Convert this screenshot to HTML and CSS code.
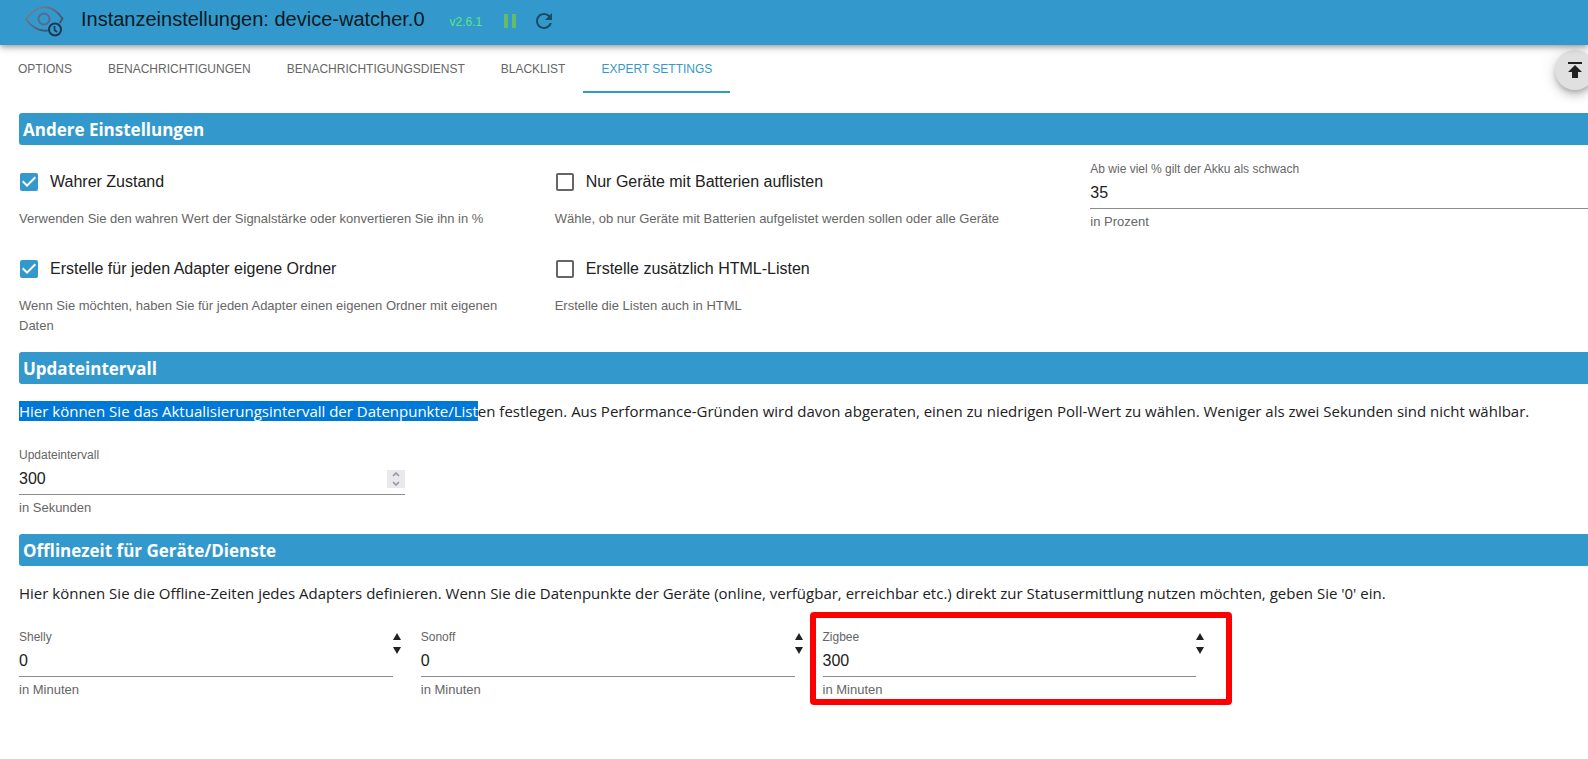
FILE: index.html
```html
<!DOCTYPE html>
<html lang="de">
<head>
<meta charset="utf-8">
<meta name="viewport" content="width=device-width, initial-scale=1">
<title>Instanzeinstellungen: device-watcher.0</title>
<link rel="stylesheet" href="styles.css">
</head>
<body>
<header class="appbar">
  <svg class="logo" viewBox="0 0 40 32" fill="none" stroke-width="2" aria-hidden="true">
    <defs>
      <linearGradient id="lid" x1="0" y1="0" x2="1" y2="1">
        <stop offset="0" stop-color="#7d88a0"/>
        <stop offset="1" stop-color="#2f4763"/>
      </linearGradient>
    </defs>
    <path stroke="url(#lid)" stroke-linecap="round" d="M23 25.500C15 26.500 8 22 2 14.500C8 6 14 2 20.500 2S33 6 38.500 13.500L36 17.500"/>
    <circle stroke="#5a6b86" cx="20" cy="14" r="5.500"/>
    <circle stroke="#1d3850" cx="31" cy="24.500" r="6"/>
    <path stroke="#1d3850" stroke-width="1.700" d="M30.500 21v4l2.500 2"/>
  </svg>
  <h1 class="appbar-title">Instanzeinstellungen: device-watcher.0</h1>
  <span class="version">v2.6.1</span>
  <button class="icon-button pause" type="button" aria-label="Pause">
    <svg viewBox="0 0 24 24"><path fill="currentColor" d="M6 19h4V5H6v14zm8-14v14h4V5h-4z"/></svg>
  </button>
  <button class="icon-button reload" type="button" aria-label="Neu starten">
    <svg viewBox="0 0 24 24"><path fill="currentColor" d="M17.650 6.350C16.200 4.900 14.210 4 12 4c-4.420 0-7.990 3.580-7.990 8s3.570 8 7.990 8c3.730 0 6.840-2.550 7.730-6h-2.080c-.82 2.330-3.040 4-5.650 4-3.310 0-6-2.690-6-6s2.690-6 6-6c1.660 0 3.140.69 4.220 1.780L13 11h7V4l-2.350 2.350z"/></svg>
  </button>
</header>

<nav class="tabs">
  <a class="tab" href="#options">OPTIONS</a>
  <a class="tab" href="#benachrichtigungen">BENACHRICHTIGUNGEN</a>
  <a class="tab" href="#dienst">BENACHRICHTIGUNGSDIENST</a>
  <a class="tab" href="#blacklist">BLACKLIST</a>
  <a class="tab tab-active" href="#expert" aria-current="page">EXPERT SETTINGS</a>
  <button class="fab" type="button" aria-label="Nach oben">
    <svg viewBox="0 0 24 24"><path fill="currentColor" d="M5 4v2h14V4H5zm0 10h4v6h6v-6h4l-7-7-7 7z"/></svg>
  </button>
</nav>

<main class="content">
  <section class="section">
    <h2 class="section-title">Andere Einstellungen</h2>
    <div class="grid grid-3">
      <div class="option">
        <label class="option-label">
          <span class="check"><input type="checkbox" checked><svg viewBox="0 0 18 18"><path fill="currentColor" d="M7 14L2 9l1.400-1.400L7 11.200l7.600-7.600L16 5z"/></svg></span>
          Wahrer Zustand
        </label>
        <p class="hint">Verwenden Sie den wahren Wert der Signalstärke oder konvertieren Sie ihn in %</p>
      </div>
      <div class="option">
        <label class="option-label">
          <span class="check"><input type="checkbox"></span>
          Nur Geräte mit Batterien auflisten
        </label>
        <p class="hint">Wähle, ob nur Geräte mit Batterien aufgelistet werden sollen oder alle Geräte</p>
      </div>
      <div class="field">
        <label class="field-label" for="akku">Ab wie viel % gilt der Akku als schwach</label>
        <div class="field-line"><input class="field-input" id="akku" type="number" value="35"></div>
        <p class="hint">in Prozent</p>
      </div>
      <div class="option">
        <label class="option-label">
          <span class="check"><input type="checkbox" checked><svg viewBox="0 0 18 18"><path fill="currentColor" d="M7 14L2 9l1.400-1.400L7 11.200l7.600-7.600L16 5z"/></svg></span>
          Erstelle für jeden Adapter eigene Ordner
        </label>
        <p class="hint">Wenn Sie möchten, haben Sie für jeden Adapter einen eigenen Ordner mit eigenen Daten</p>
      </div>
      <div class="option">
        <label class="option-label">
          <span class="check"><input type="checkbox"></span>
          Erstelle zusätzlich HTML-Listen
        </label>
        <p class="hint">Erstelle die Listen auch in HTML</p>
      </div>
    </div>
  </section>

  <section class="section">
    <h2 class="section-title">Updateintervall</h2>
    <p class="description"><mark class="selection">Hier können Sie das Aktualisierungsintervall der Datenpunkte/List</mark>en festlegen. Aus Performance-Gründen wird davon abgeraten, einen zu niedrigen Poll-Wert zu wählen. Weniger als zwei Sekunden sind nicht wählbar.</p>
    <div class="grid grid-4">
      <div class="field">
        <label class="field-label" for="intervall">Updateintervall</label>
        <div class="field-line">
          <input class="field-input" id="intervall" type="number" value="300">
          <span class="spinner">
            <button type="button" aria-label="Erhöhen"><svg viewBox="0 0 18 9"><path d="M6 6l3-3 3 3"/></svg></button>
            <button type="button" aria-label="Verringern"><svg viewBox="0 0 18 9"><path d="M6 3l3 3 3-3"/></svg></button>
          </span>
        </div>
        <p class="hint">in Sekunden</p>
      </div>
    </div>
  </section>

  <section class="section">
    <h2 class="section-title">Offlinezeit für Geräte/Dienste</h2>
    <p class="description">Hier können Sie die Offline-Zeiten jedes Adapters definieren. Wenn Sie die Datenpunkte der Geräte (online, verfügbar, erreichbar etc.) direkt zur Statusermittlung nutzen möchten, geben Sie '0' ein.</p>
    <div class="grid grid-4">
      <div class="stepper">
        <div class="field">
          <label class="field-label" for="shelly">Shelly</label>
          <div class="field-line"><input class="field-input" id="shelly" type="number" value="0"></div>
          <p class="hint">in Minuten</p>
        </div>
        <div class="steps">
          <button type="button" aria-label="Shelly erhöhen"><svg viewBox="0 0 8 7"><path fill="currentColor" d="M0 7l4-7 4 7z"/></svg></button>
          <button type="button" aria-label="Shelly verringern"><svg viewBox="0 0 8 7"><path fill="currentColor" d="M0 0h8L4 7z"/></svg></button>
        </div>
      </div>
      <div class="stepper">
        <div class="field">
          <label class="field-label" for="sonoff">Sonoff</label>
          <div class="field-line"><input class="field-input" id="sonoff" type="number" value="0"></div>
          <p class="hint">in Minuten</p>
        </div>
        <div class="steps">
          <button type="button" aria-label="Sonoff erhöhen"><svg viewBox="0 0 8 7"><path fill="currentColor" d="M0 7l4-7 4 7z"/></svg></button>
          <button type="button" aria-label="Sonoff verringern"><svg viewBox="0 0 8 7"><path fill="currentColor" d="M0 0h8L4 7z"/></svg></button>
        </div>
      </div>
      <div class="stepper stepper-marked">
        <div class="field">
          <label class="field-label" for="zigbee">Zigbee</label>
          <div class="field-line"><input class="field-input" id="zigbee" type="number" value="300"></div>
          <p class="hint">in Minuten</p>
        </div>
        <div class="steps">
          <button type="button" aria-label="Zigbee erhöhen"><svg viewBox="0 0 8 7"><path fill="currentColor" d="M0 7l4-7 4 7z"/></svg></button>
          <button type="button" aria-label="Zigbee verringern"><svg viewBox="0 0 8 7"><path fill="currentColor" d="M0 0h8L4 7z"/></svg></button>
        </div>
      </div>
    </div>
  </section>
</main>
</body>
</html>
```

FILE: styles.css
```css
* {
  box-sizing: border-box;
}

body {
  min-height: 100vh;
  margin: 0;
  overflow-x: hidden;
  background: #fff;
  color: #212121;
  font-family: "Liberation Sans", Arial, sans-serif;
  font-size: 16px;
}

h1, h2, p {
  margin: 0;
}

button {
  display: flex;
  align-items: center;
  justify-content: center;
  padding: 0;
  border: 0;
  background: none;
  color: inherit;
}

/* Header */
.appbar {
  position: relative;
  display: flex;
  align-items: center;
  height: 45px;
  padding: 0 24px 4px;
  background: #3399cc;
  box-shadow: 0 2px 4px -1px rgba(0, 0, 0, .2), 0 4px 5px rgba(0, 0, 0, .14), 0 1px 10px rgba(0, 0, 0, .12);
}

.logo {
  width: 40px;
  height: 32px;
}

.appbar-title {
  margin: 0 0 4px 17px;
  color: #0a1a22;
  font-size: 20px;
  font-weight: 400;
  line-height: 32px;
}

.version {
  margin: 2px 16px 0 25px;
  color: #5be584;
  font-size: 12px;
}

.icon-button {
  margin-right: 10px;
}

.icon-button svg {
  width: 24px;
  height: 24px;
}

.pause {
  color: #66bb6a;
}

.reload {
  color: #1b4b64;
}

/* Tabs */
.tabs {
  display: flex;
  align-items: center;
  height: 48px;
  margin-right: -7px;
}

.tab {
  display: flex;
  align-items: center;
  justify-content: center;
  height: 48px;
  padding: 2px 18px 0;
  border-bottom: 2px solid transparent;
  color: #666;
  font-size: 12px;
  text-decoration: none;
  white-space: nowrap;
}

.tab-active {
  border-color: #3399cc;
  color: #3399cc;
}

.fab {
  width: 40px;
  height: 40px;
  margin: 2px 0 0 auto;
  border-radius: 50%;
  background: #e0e0e0;
  box-shadow: 0 3px 5px -1px rgba(0, 0, 0, .2), 0 6px 10px rgba(0, 0, 0, .14), 0 1px 18px rgba(0, 0, 0, .12);
}

.fab svg {
  width: 24px;
  height: 24px;
}

/* Sections */
.content {
  display: flex;
  flex-direction: column;
  gap: 16px;
  margin: 20px -22px 0 19px;
  padding-bottom: 32px;
}

.section-title {
  height: 32px;
  margin-bottom: 16px;
  padding-left: 4px;
  border-radius: 3px;
  background: #3399cc;
  color: #fff;
  font-family: "Open Sans", "Noto Sans", sans-serif;
  font-size: 17px;
  font-weight: 700;
  line-height: 34px;
}

.description {
  margin-bottom: 25px;
  font-family: "Open Sans", "Noto Sans", sans-serif;
  font-size: 15px;
  line-height: 22px;
}

.selection {
  background: #0078d7;
  color: #fff;
}

.grid {
  display: grid;
  gap: 16px;
}

.grid-3 {
  grid-template-columns: repeat(3, 1fr);
}

.grid-4 {
  grid-template-columns: repeat(4, 1fr);
}

.hint {
  padding-right: 16px;
  color: #666;
  font-size: 13px;
  line-height: 20px;
}

/* Checkboxes */
.option-label {
  display: flex;
  align-items: center;
  gap: 12px;
  height: 42px;
  margin-bottom: 6px;
  padding-left: 1px;
}

.check {
  position: relative;
  width: 18px;
  height: 18px;
}

.check input {
  display: block;
  width: 18px;
  height: 18px;
  margin: 0;
  appearance: none;
  border: 2px solid #666;
  border-radius: 2px;
}

.check input:checked {
  border-color: #3399cc;
  background: #3399cc;
}

.check svg {
  position: absolute;
  inset: 0;
  color: #fff;
  pointer-events: none;
}

/* Number fields */
.field {
  flex: 1;
}

.field-label {
  display: block;
  color: #666;
  font-size: 12px;
  line-height: 16px;
}

.field-line {
  display: flex;
  align-items: center;
  height: 32px;
  margin-bottom: 3px;
  border-bottom: 1px solid #8c8c8c;
}

.field-input {
  flex: 1;
  min-width: 0;
  padding: 0;
  border: 0;
  outline: 0;
  background: none;
  color: inherit;
  font: inherit;
  appearance: textfield;
}

.field-input::-webkit-inner-spin-button {
  display: none;
}

.spinner {
  width: 18px;
  height: 18px;
  background: #e9e9ed;
}

.spinner svg {
  width: 18px;
  height: 9px;
  fill: none;
  stroke: #8f8f9d;
  stroke-width: 1.5;
}

.stepper {
  position: relative;
  display: flex;
}

.steps {
  width: 12px;
}

.steps button {
  width: 8px;
  height: 14px;
}

.steps svg {
  width: 8px;
  height: 7px;
}

/* Marking frame around a field */
.stepper-marked::after {
  content: "";
  position: absolute;
  inset: -17px -24px -5px -13px;
  border: 6px solid #f00;
  border-radius: 4px;
  pointer-events: none;
}
```
